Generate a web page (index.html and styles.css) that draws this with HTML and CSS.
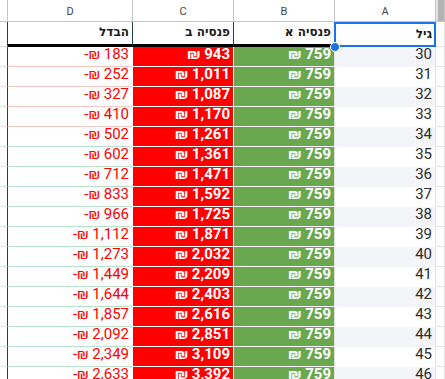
FILE: index.html
```html
<!DOCTYPE html>
<html lang="he">
<head>
<meta charset="utf-8">
<title>Sheet</title>
<link rel="stylesheet" href="styles.css">
</head>
<body>
<div class="sheet">
  <div class="grid">
    <div class="c hd edge"></div>
    <div class="c hd">D</div>
    <div class="c hd">C</div>
    <div class="c hd">B</div>
    <div class="c hd">A</div>
    <div class="c hd corner"><span class="thumb"></span></div>

    <div class="c t edge"></div>
    <div class="c t title dk">הבדל</div>
    <div class="c t title dk">פנסיה ב</div>
    <div class="c t title">פנסיה א</div>
    <div class="c t title sel">גיל<span class="handle"></span></div>
    <div class="c t gut"></div>

    <div class="c edge"></div><div class="c diff pk">-₪ 183</div><div class="c neg">₪ 943</div><div class="c pos">₪ 759</div><div class="c age bd">30</div><div class="c gut"></div>
    <div class="c edge"></div><div class="c diff pk">-₪ 252</div><div class="c neg">₪ 1,011</div><div class="c pos">₪ 759</div><div class="c age">31</div><div class="c gut"></div>
    <div class="c edge"></div><div class="c diff pk">-₪ 327</div><div class="c neg">₪ 1,087</div><div class="c pos">₪ 759</div><div class="c age bd">32</div><div class="c gut"></div>
    <div class="c edge"></div><div class="c diff pk">-₪ 410</div><div class="c neg">₪ 1,170</div><div class="c pos">₪ 759</div><div class="c age">33</div><div class="c gut"></div>
    <div class="c edge"></div><div class="c diff">-₪ 502</div><div class="c neg">₪ 1,261</div><div class="c pos">₪ 759</div><div class="c age bd">34</div><div class="c gut"></div>
    <div class="c edge"></div><div class="c diff">-₪ 602</div><div class="c neg">₪ 1,361</div><div class="c pos">₪ 759</div><div class="c age">35</div><div class="c gut"></div>
    <div class="c edge"></div><div class="c diff">-₪ 712</div><div class="c neg">₪ 1,471</div><div class="c pos">₪ 759</div><div class="c age bd">36</div><div class="c gut"></div>
    <div class="c edge"></div><div class="c diff">-₪ 833</div><div class="c neg">₪ 1,592</div><div class="c pos">₪ 759</div><div class="c age">37</div><div class="c gut"></div>
    <div class="c edge"></div><div class="c diff">-₪ 966</div><div class="c neg">₪ 1,725</div><div class="c pos">₪ 759</div><div class="c age bd">38</div><div class="c gut"></div>
    <div class="c edge"></div><div class="c diff">-₪ 1,112</div><div class="c neg">₪ 1,871</div><div class="c pos">₪ 759</div><div class="c age">39</div><div class="c gut"></div>
    <div class="c edge"></div><div class="c diff">-₪ 1,273</div><div class="c neg">₪ 2,032</div><div class="c pos">₪ 759</div><div class="c age bd">40</div><div class="c gut"></div>
    <div class="c edge"></div><div class="c diff">-₪ 1,449</div><div class="c neg">₪ 2,209</div><div class="c pos">₪ 759</div><div class="c age">41</div><div class="c gut"></div>
    <div class="c edge"></div><div class="c diff">-₪ 1,644</div><div class="c neg">₪ 2,403</div><div class="c pos">₪ 759</div><div class="c age bd">42</div><div class="c gut"></div>
    <div class="c edge"></div><div class="c diff">-₪ 1,857</div><div class="c neg">₪ 2,616</div><div class="c pos">₪ 759</div><div class="c age">43</div><div class="c gut"></div>
    <div class="c edge"></div><div class="c diff">-₪ 2,092</div><div class="c neg">₪ 2,851</div><div class="c pos">₪ 759</div><div class="c age bd">44</div><div class="c gut"></div>
    <div class="c edge"></div><div class="c diff">-₪ 2,349</div><div class="c neg">₪ 3,109</div><div class="c pos">₪ 759</div><div class="c age">45</div><div class="c gut"></div>
    <div class="c edge"></div><div class="c diff">-₪ 2,633</div><div class="c neg">₪ 3,392</div><div class="c pos">₪ 759</div><div class="c age bd">46</div><div class="c gut"></div>
  </div>
</div>
</body>
</html>
```
FILE: styles.css
```css
* { box-sizing: border-box; }
html, body { margin: 0; padding: 0; background: #fff; }
body { width: 445px; height: 379px; overflow: hidden; }
.sheet { width: 445px; overflow: hidden; }
.grid {
  display: grid;
  grid-template-columns: 8px 125px 101px 101px 101px 9px;
  grid-template-rows: 22px 25px;
  grid-auto-rows: 20px;
  font-family: Roboto, "Liberation Sans", sans-serif;
}
.c {
  display: flex;
  align-items: flex-end;
  justify-content: flex-end;
  padding: 0 3px 4px 3px;
  font-size: 15px;
  line-height: 15px;
  white-space: nowrap;
  overflow: visible;
  border-right: 1px solid #e2e2e2;
  border-bottom: 1px solid #e2e2e2;
}
.hd {
  justify-content: center;
  align-items: center;
  padding: 1px 0 0 0;
  font-size: 11px;
  color: #444746;
  border-right: 1px solid #c4c7c5;
  border-bottom: 1px solid #c4c7c5;
}
.corner { background: #e3e3e3; justify-content: flex-end; padding: 0; align-items: stretch; }
.thumb { display: block; width: 6px; background: #b4b4b4; }
.edge { padding: 0; border-right: 1px solid #23423a; }
.hd.edge { border-right-color: #c4c7c5; }
.t { border-bottom: 3px solid #000; height: 25px; padding-bottom: 6px; }
.t.edge { border-bottom: 1px solid #dcdcdc; }
.title {
  font-family: "DejaVu Sans", "Liberation Sans", sans-serif;
  font-weight: bold;
  font-size: 12px;
  line-height: 12px;
  color: #1a1a1a;
  direction: rtl;
  justify-content: flex-start;
}
.dk { border-right: 1px solid #23423a; }
.sel {
  position: relative;
  border: 2px solid #1a73e8;
  border-bottom-width: 2px;
  margin-left: -1px;
  padding-right: 2px;
  padding-bottom: 5px;
}
.handle {
  position: absolute;
  left: -6px;
  bottom: -7px;
  width: 10px;
  height: 10px;
  border-radius: 50%;
  background: #1a73e8;
  border: 1px solid #fff;
  z-index: 2;
}
.gut { padding: 0; border-right: 1px solid #e2e2e2; }
.t.gut { border-bottom: 1px solid #e2e2e2; }
.diff {
  color: #ff0000;
  border-right: 1px solid #fff;
  border-bottom: 1px solid #b7e1cd;
}
.diff.pk { border-bottom-color: #f4c7c3; }
.neg {
  background: #ff0000;
  color: #fff;
  font-weight: bold;
  border-right: 1px solid #fff;
  border-bottom: 1px solid #fff;
}
.pos {
  background: #6aa84f;
  color: #fff;
  font-weight: bold;
  border-right: 1px solid #e2e2e2;
  border-bottom: 1px solid #fff;
}
.age {
  color: #2b2b2b;
  border-bottom: 1px solid transparent;
  border-right: 1px solid #e2e2e2;
}
.bd { background: #f3f5f8; }
```
